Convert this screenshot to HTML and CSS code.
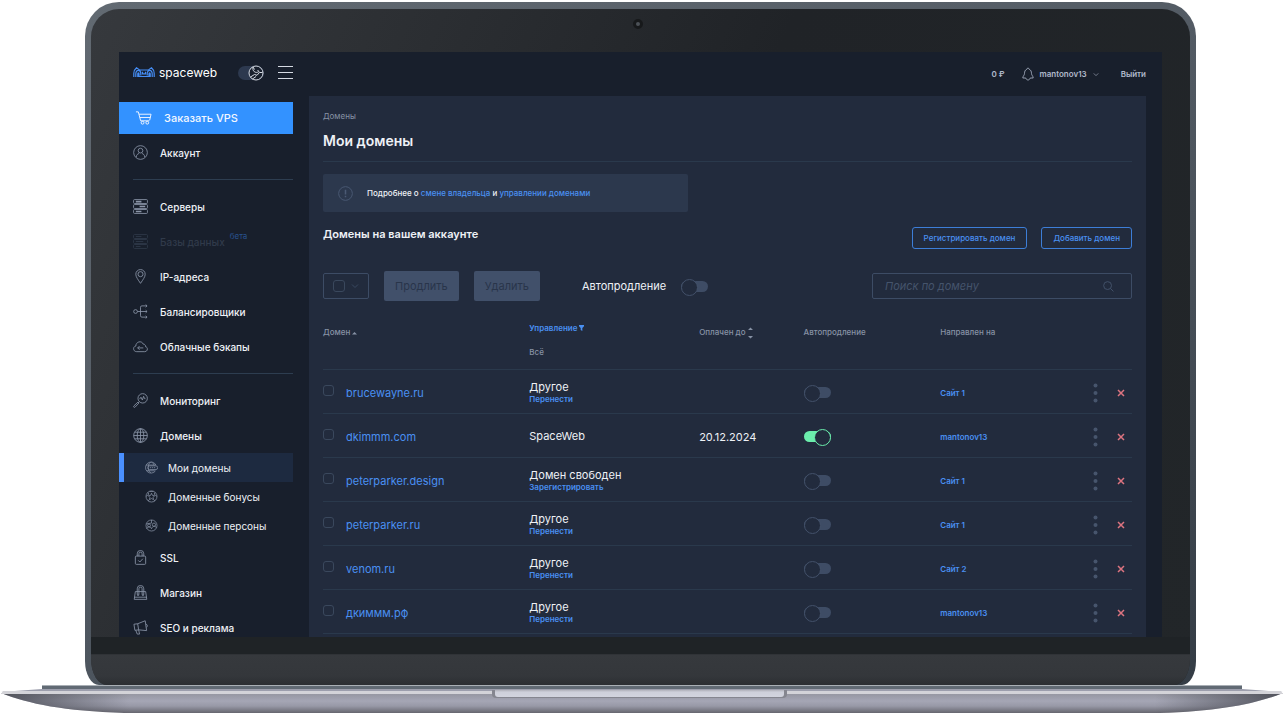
FILE: index.html
```html
<!DOCTYPE html>
<html lang="ru">
<head>
<meta charset="utf-8">
<meta name="viewport" content="width=device-width, initial-scale=1">
<title>Мои домены — spaceweb</title>
<link rel="stylesheet" href="styles.css">
</head>
<body>
<svg class="sprite" aria-hidden="true">
  <symbol id="i-dots" viewBox="0 0 5 20"><circle cx="2.5" cy="2.5" r="2"/><circle cx="2.5" cy="10" r="2"/><circle cx="2.5" cy="17.5" r="2"/></symbol>
  <symbol id="i-x" viewBox="0 0 8 8"><path d="M1 1l6 6M7 1L1 7"/></symbol>
  <symbol id="i-chevron" viewBox="0 0 8 6"><path d="M1 1.500l3 3 3-3"/></symbol>
</svg>
<div class="laptop">
  <div class="lid">
    <div class="bezel">
      <div class="camera-bar"><span class="camera"></span></div>
      <div class="screen">
        <header class="topbar">
          <a class="logo" href="#">
            <svg class="logo-mark" viewBox="0 0 22 11"><path d="M.8 10V6.500C.8 4 2 2 3.500.8L6.500 3h9l3-2.200C20 2 21.200 4 21.200 6.500V10M2.800 10V7c0-2 1-3.700 2.500-3.700S7.800 5 7.800 6.500v2M4.800 10V6.800c0-1.300 1.200-1.300 1.200 0v2.700h10V6.800c0-1.300 1.200-1.300 1.200 0V10M19.200 10V7c0-2-1-3.700-2.500-3.700S14.200 5 14.200 6.500v2M9.500 4.800v2h3v-2"/></svg>
            <span>spaceweb</span>
          </a>
          <button class="theme" type="button" aria-label="Тёмная тема">
            <svg viewBox="0 0 16 16"><circle cx="8" cy="8" r="7"/><path d="M5 2c-1 4 2.500 7 6 4.500L9.500 5M5 2l1.500 2.500M2.500 12l4-2.500 2.500.8 2.500-2.800h3M4.500 14l3.500-2.500"/></svg>
          </button>
          <button class="burger" type="button" aria-label="Меню"><span></span><span></span><span></span></button>
          <nav class="account" aria-label="Профиль">
            <a href="#">0 ₽</a>
            <a class="user" href="#">
              <svg class="bell" viewBox="0 0 12 14"><path d="M6 1c-.8 0-1 .8-1.200 1.300C3 3 2.600 4.500 2.500 6.500 2.400 8.500.8 9 .8 11h3C4.200 12.300 5 13 6 13s1.800-.7 2.200-2h3c0-2-1.600-2.500-1.700-4.500C9.400 4.500 9 3 7.200 2.300 7 1.800 6.800 1 6 1z"/></svg>
              <span>mantonov13</span>
              <svg class="chevron"><use href="#i-chevron"/></svg>
            </a>
            <a href="#">Выйти</a>
          </nav>
        </header>
        <div class="columns">
          <aside class="sidebar">
            <a class="order" href="#">
              <svg viewBox="0 0 18 16"><path d="M1 1.500h2.500L6 11h9M4.300 4H17l-1.500 6.500M5.200 7.500h11"/><circle cx="8" cy="13" r="1.500"/><circle cx="13" cy="13" r="1.500"/></svg>
              <span>Заказать VPS</span>
            </a>
            <nav class="menu" aria-label="Разделы">
              <a href="#"><svg viewBox="0 0 16 16"><circle cx="8" cy="8" r="7.300"/><circle cx="8" cy="6" r="2.500"/><path d="M3.500 13c0-2.500 1.500-3.500 3-4M12.500 13c0-2.500-1.500-3.500-3-4"/></svg><span>Аккаунт</span></a>
              <hr>
              <a href="#"><svg viewBox="0 0 16 16"><rect x=".6" y=".6" width="14.800" height="4.200" rx="1"/><rect x=".6" y="5.900" width="14.800" height="4.200" rx="1"/><rect x=".6" y="11.200" width="14.800" height="4.200" rx="1"/><path d="M3 2.700h6M7 8h6M3 13.300h6" stroke-width="1.800"/></svg><span>Серверы</span></a>
              <a class="disabled" href="#"><svg viewBox="0 0 16 16"><rect x=".6" y=".6" width="14.800" height="4.200" rx="1"/><rect x=".6" y="5.900" width="14.800" height="4.200" rx="1"/><rect x=".6" y="11.200" width="14.800" height="4.200" rx="1"/><path d="M3 2.700h6M3 8h8M3 13.300h5"/></svg><span>Базы данных</span><sup>бета</sup></a>
              <a href="#"><svg viewBox="0 0 16 16"><path d="M8 15.300C5.500 11.500 3 8.500 3 5.600a5 5 0 0 1 10 0c0 2.900-2.500 5.900-5 9.700z"/><circle cx="8" cy="5.500" r="2.700"/></svg><span>IP-адреса</span></a>
              <a href="#"><svg viewBox="0 0 16 16"><circle cx="2.700" cy="8" r="2"/><path d="M4.700 8H15M15 2H9.500C8.500 2 8 2.500 8 3.500v9c0 1 .5 1.500 1.500 1.500H15M13.500.6L15 2l-1.500 1.400M13.500 6.600L15 8l-1.500 1.400M13.500 12.600L15 14l-1.500 1.400"/></svg><span>Балансировщики</span></a>
              <a href="#"><svg viewBox="0 0 16 16"><path d="M4 13.500C-.3 13.500-.3 8 3 7.500 3 3 9 1 11 5.500c2 0 2.500 1.500 2.300 2.700 3 .3 2.700 5.300-.8 5.300H4zM11 9.500H5M7 7.500l-2 2 2 2"/></svg><span>Облачные бэкапы</span></a>
              <hr>
              <a href="#"><svg viewBox="0 0 16 16"><circle cx="10.300" cy="5.700" r="5"/><path d="M6.800 9.200l-1 1M5.300 9.700l1 1-4 4.300c-1 1-2.300-.3-1.300-1.300zM7 6.500l1.500-2 1.500 3 1.300-4 1 2.500h1"/></svg><span>Мониторинг</span></a>
              <a href="#"><svg viewBox="0 0 16 16"><circle cx="8" cy="8" r="7.300"/><ellipse cx="8" cy="8" rx="3.500" ry="7.300"/><path d="M8 .7v14.600M.7 8h14.600M1.800 4.500h12.400M1.800 11.500h12.400"/></svg><span>Домены</span></a>
              <div class="submenu">
                <a class="active" href="#" aria-current="page"><svg viewBox="0 0 16 16"><path d="M13.500 5A6.800 6.800 0 1 0 13 12"/><path d="M1.300 5h12M2 12h10M7 1.200C4.500 3.500 4 5 4 8s.7 4.500 3 6.500M8 1.200c2 1.300 2.800 2.500 3 4"/><rect x="3.500" y="6" width="12" height="4.500" rx="2"/><path d="M6 8.200h7.500" stroke-dasharray="1.500 1"/></svg><span>Мои домены</span></a>
                <a href="#"><svg viewBox="0 0 16 16"><circle cx="8" cy="8" r="6.800"/><path d="M8 4l1.200 2.700 2.800.3-2 2 .6 2.900L8 10.500l-2.600 1.400L6 9 4 7l2.800-.3zM3.500 3l1.300 2L1.300 8M12.500 3l-1.300 2 3.500 3M5.500 1.700h5M3.500 12l1.500 2M12.500 12L11 14"/></svg><span>Доменные бонусы</span></a>
                <a href="#"><svg viewBox="0 0 16 16"><circle cx="8" cy="8" r="6.800"/><circle cx="5" cy="8" r="1.800"/><circle cx="11" cy="7" r="2"/><path d="M2 12c.5-3 5-3 6 0 .5-3.500 5.500-4 6-1M1.500 6L8 5V1.200"/></svg><span>Доменные персоны</span></a>
              </div>
              <a href="#"><svg viewBox="0 0 16 16"><rect x="2.500" y="6.500" width="11" height="8.800" rx="1"/><path d="M4.500 6.500V4a3.500 3.500 0 0 1 7 0v2.500M6.300 6.500V4a1.700 1.700 0 0 1 3.400 0v2.500M5.500 11l1.800 1.800 3.200-3.500"/></svg><span>SSL</span></a>
              <a href="#"><svg viewBox="0 0 16 16"><path d="M2.500 7h11l1.200 8.300H1.300zM4.500 10V4a3.500 3.500 0 0 1 7 0v6M6.300 10V4a1.700 1.700 0 0 1 3.400 0v6"/><circle cx="5.400" cy="10.500" r=".8"/><circle cx="10.600" cy="10.500" r=".8"/><path d="M1.500 13h13"/></svg><span>Магазин</span></a>
              <a href="#"><svg viewBox="0 0 16 16"><path d="M1 4.500l4-.5 8-3.200 1.500 10.500L6 10.500l-4 .5zM5 4l1 6.500M3 11l1.500 4H7l-1-4.500M14 4.500c1.700.2 1.700 3 .3 3.200"/></svg><span>SEO и реклама</span></a>
            </nav>
          </aside>
          <main class="panel">
            <div class="page-head">
              <a class="crumb" href="#">Домены</a>
              <h1>Мои домены</h1>
            </div>
            <div class="notice">
              <svg viewBox="0 0 16 16"><circle cx="8" cy="8" r="7.300"/><path d="M8 4v5M8 10.500v1.500" stroke-width="1.600"/></svg>
              <p>Подробнее о <a href="#">смене владельца</a> и <a href="#">управлении доменами</a></p>
            </div>
            <div class="section-head">
              <h2>Домены на вашем аккаунте</h2>
              <button class="outline" type="button">Регистрировать домен</button>
              <button class="outline" type="button">Добавить домен</button>
            </div>
            <div class="toolbar">
              <div class="picker">
                <input class="check" type="checkbox" aria-label="Выбрать все">
                <svg class="chevron"><use href="#i-chevron"/></svg>
              </div>
              <button class="action" type="button" disabled>Продлить</button>
              <button class="action" type="button" disabled>Удалить</button>
              <label class="auto"><span>Автопродление</span><input class="switch" type="checkbox"></label>
              <div class="search">
                <input type="search" placeholder="Поиск по домену" aria-label="Поиск по домену">
                <svg viewBox="0 0 12 12"><circle cx="5" cy="5" r="4.300"/><path d="M8.200 8.200l3.200 3.200"/></svg>
              </div>
            </div>
            <table>
              <colgroup><col class="c-domain"><col class="c-manage"><col class="c-paid"><col class="c-auto"><col class="c-target"><col class="c-tools"></colgroup>
              <thead>
                <tr>
                  <th scope="col">Домен <svg class="sort" viewBox="0 0 5 8"><path d="M0 5.500L2.500 3 5 5.500z"/></svg></th>
                  <th scope="col"><span class="filter">Управление <svg viewBox="0 0 6 7"><path d="M0 0h6v1.500L4 3.500V7L2 6V3.500L0 1.500z"/></svg></span><span class="filter-value">Всё</span></th>
                  <th scope="col">Оплачен до <svg class="sort tall" viewBox="0 0 5 12"><path d="M0 3L2.500.5 5 3zM0 9l2.500 2.500L5 9z"/></svg></th>
                  <th scope="col">Автопродление</th>
                  <th scope="col">Направлен на</th>
                  <th></th>
                </tr>
              </thead>
              <tbody>
                <tr>
                  <td><div class="domain"><input class="check" type="checkbox" aria-label="brucewayne.ru"><a href="#">brucewayne.ru</a></div></td>
                  <td><div class="manage">Другое<a href="#">Перенести</a></div></td>
                  <td></td>
                  <td><input class="switch" type="checkbox" aria-label="Автопродление brucewayne.ru"></td>
                  <td><a class="target" href="#">Сайт 1</a></td>
                  <td><div class="tools"><button type="button" aria-label="Действия"><svg class="dots"><use href="#i-dots"/></svg></button><button type="button" aria-label="Удалить"><svg class="cross"><use href="#i-x"/></svg></button></div></td>
                </tr>
                <tr>
                  <td><div class="domain"><input class="check" type="checkbox" aria-label="dkimmm.com"><a href="#">dkimmm.com</a></div></td>
                  <td><div class="manage">SpaceWeb</div></td>
                  <td>20.12.2024</td>
                  <td><input class="switch" type="checkbox" checked aria-label="Автопродление dkimmm.com"></td>
                  <td><a class="target" href="#">mantonov13</a></td>
                  <td><div class="tools"><button type="button" aria-label="Действия"><svg class="dots"><use href="#i-dots"/></svg></button><button type="button" aria-label="Удалить"><svg class="cross"><use href="#i-x"/></svg></button></div></td>
                </tr>
                <tr>
                  <td><div class="domain"><input class="check" type="checkbox" aria-label="peterparker.design"><a href="#">peterparker.design</a></div></td>
                  <td><div class="manage">Домен свободен<a href="#">Зарегистрировать</a></div></td>
                  <td></td>
                  <td><input class="switch" type="checkbox" aria-label="Автопродление peterparker.design"></td>
                  <td><a class="target" href="#">Сайт 1</a></td>
                  <td><div class="tools"><button type="button" aria-label="Действия"><svg class="dots"><use href="#i-dots"/></svg></button><button type="button" aria-label="Удалить"><svg class="cross"><use href="#i-x"/></svg></button></div></td>
                </tr>
                <tr>
                  <td><div class="domain"><input class="check" type="checkbox" aria-label="peterparker.ru"><a href="#">peterparker.ru</a></div></td>
                  <td><div class="manage">Другое<a href="#">Перенести</a></div></td>
                  <td></td>
                  <td><input class="switch" type="checkbox" aria-label="Автопродление peterparker.ru"></td>
                  <td><a class="target" href="#">Сайт 1</a></td>
                  <td><div class="tools"><button type="button" aria-label="Действия"><svg class="dots"><use href="#i-dots"/></svg></button><button type="button" aria-label="Удалить"><svg class="cross"><use href="#i-x"/></svg></button></div></td>
                </tr>
                <tr>
                  <td><div class="domain"><input class="check" type="checkbox" aria-label="venom.ru"><a href="#">venom.ru</a></div></td>
                  <td><div class="manage">Другое<a href="#">Перенести</a></div></td>
                  <td></td>
                  <td><input class="switch" type="checkbox" aria-label="Автопродление venom.ru"></td>
                  <td><a class="target" href="#">Сайт 2</a></td>
                  <td><div class="tools"><button type="button" aria-label="Действия"><svg class="dots"><use href="#i-dots"/></svg></button><button type="button" aria-label="Удалить"><svg class="cross"><use href="#i-x"/></svg></button></div></td>
                </tr>
                <tr>
                  <td><div class="domain"><input class="check" type="checkbox" aria-label="дкиммм.рф"><a href="#">дкиммм.рф</a></div></td>
                  <td><div class="manage">Другое<a href="#">Перенести</a></div></td>
                  <td></td>
                  <td><input class="switch" type="checkbox" aria-label="Автопродление дкиммм.рф"></td>
                  <td><a class="target" href="#">mantonov13</a></td>
                  <td><div class="tools"><button type="button" aria-label="Действия"><svg class="dots"><use href="#i-dots"/></svg></button><button type="button" aria-label="Удалить"><svg class="cross"><use href="#i-x"/></svg></button></div></td>
                </tr>
              </tbody>
            </table>
          </main>
        </div>
      </div>
      <div class="chin-gap"></div>
      <div class="chin"></div>
    </div>
  </div>
  <svg class="base" viewBox="0 0 1284 28" preserveAspectRatio="none" aria-hidden="true">
    <defs>
      <linearGradient id="metal" x1="0" y1="0" x2="0" y2="1"><stop offset="0" stop-color="#94959f"/><stop offset=".4" stop-color="#a5a6b5"/><stop offset=".65" stop-color="#9899a7"/><stop offset="1" stop-color="#66666f"/></linearGradient>
      <linearGradient id="ends"><stop offset="0" stop-color="#3e4048" stop-opacity=".8"/><stop offset=".1" stop-color="#3e4048" stop-opacity="0"/><stop offset=".9" stop-color="#3e4048" stop-opacity="0"/><stop offset="1" stop-color="#3e4048" stop-opacity=".8"/></linearGradient>
      <linearGradient id="notch" x1="0" y1="0" x2="0" y2="1"><stop offset="0" stop-color="#b0b1ba"/><stop offset=".3" stop-color="#ced0da"/><stop offset="1" stop-color="#d2d4de"/></linearGradient>
    </defs>
    <path fill="#9c9eac" d="M1 7L42 4H1242L1283 7z"/>
    <path fill="url(#metal)" d="M1 8H1283C1255 19 1220 26 1160 28H124C64 26 29 19 1 8z"/>
    <path fill="url(#ends)" d="M1 8H1283C1255 19 1220 26 1160 28H124C64 26 29 19 1 8z"/>
    <path fill="#d3d3d8" d="M3 6H1281L1283 9H1z"/>
    <path fill="#616a74" d="M42 1H1242V4H42z"/>
    <path fill="#a9afb5" d="M42 0H1242V1H42z"/>
    <path fill="#85868f" d="M492 5H787V9Q787 13 783 13H496Q492 13 492 9z"/>
    <path fill="url(#notch)" d="M495 5H784V9Q784 12 781 12H498Q495 12 495 9z"/>
  </svg>
</div>
</body>
</html>
```

FILE: styles.css
```css
:root {
  --ink: #181f2c;
  --panel: #222b3d;
  --card: #2c384d;
  --line: #2a394c;
  --edge: #3d4c65;
  --muted: #8792a5;
  --text: #eef1f6;
  --link: #4a90f2;
}

* {
  box-sizing: border-box;
}

body {
  margin: 0;
  background: #fff;
  color: var(--text);
  font: 11px/16px Inter, "Liberation Sans", sans-serif;
}

a {
  color: var(--link);
  text-decoration: none;
}

button,
input {
  margin: 0;
  font: inherit;
}

svg {
  flex: none;
  fill: none;
  stroke: currentColor;
}

.sprite {
  position: absolute;
  width: 0;
  height: 0;
}

/* Laptop */
.laptop {
  display: flex;
  flex-direction: column;
  height: 100vh;
  padding-top: 2px;
}

.lid {
  display: flex;
  flex: 1;
  min-height: 0;
  margin: 0 88px 0 85px;
  padding: 7px 6px 0;
  border-radius: 34px 34px 14px 14px / 34px 34px 24px 24px;
  background: linear-gradient(155deg, #626a72, #535b64 45%, #343c45);
}

.bezel {
  display: flex;
  flex: 1;
  flex-direction: column;
  min-width: 0;
  overflow: hidden;
  border-radius: 28px 28px 16px 16px / 28px 28px 26px 26px;
  background: linear-gradient(115deg, #36393d, #202327 50%, #222629);
}

.camera-bar {
  display: flex;
  flex: none;
  justify-content: center;
  height: 43px;
  padding: 10px 6px 0 0;
}

.camera {
  width: 10px;
  height: 10px;
  border: 3px solid #17191b;
  border-radius: 50%;
  background: #4c5157;
}

.screen {
  display: flex;
  flex: 1;
  flex-direction: column;
  min-height: 0;
  margin: 0 28px;
  overflow: hidden;
  background: var(--ink);
}

.chin-gap {
  flex: none;
  height: 17px;
  background: #1f2326;
}

.chin {
  flex: none;
  height: 31px;
  border-top: 1px solid #303337;
  background: linear-gradient(#36393d, #34373b 70%, #2b2e32);
}

.base {
  display: block;
  width: 100%;
  height: 28px;
  stroke: none;
}

/* Top bar */
.topbar {
  display: flex;
  flex: none;
  align-items: center;
  height: 44px;
  padding: 0 16px 3px 14px;
}

.logo {
  display: flex;
  align-items: center;
  gap: 4px;
  color: #fff;
  font-size: 12px;
}

.logo-mark {
  width: 22px;
  height: 11px;
  color: #458df5;
  stroke-width: 1.2;
}

.theme {
  display: flex;
  justify-content: flex-end;
  align-items: center;
  width: 26px;
  height: 14px;
  margin-left: 21px;
  padding: 0;
  border: 0;
  border-radius: 7px;
  background: #2d394f;
  color: #d5dae3;
}

.theme svg {
  width: 16px;
  height: 16px;
  fill: var(--ink);
}

.burger {
  display: flex;
  flex-direction: column;
  gap: 5px;
  width: 15px;
  margin-left: 14px;
  padding: 0;
  border: 0;
  background: none;
}

.burger span {
  height: 1px;
  background: #d5dae3;
}

.account {
  display: flex;
  align-items: center;
  gap: 17px;
  margin-left: auto;
  padding-top: 3px;
  font-size: 8px;
  font-weight: 600;
}

.account a {
  color: #b0b9cb;
}

.account .user {
  display: flex;
  align-items: center;
  gap: 6px;
  margin-right: 5px;
}

.bell {
  width: 12px;
  height: 14px;
  stroke-width: 0.8;
}

.chevron {
  width: 8px;
  height: 6px;
  stroke-width: 0.8;
}

.user .chevron {
  width: 6px;
  height: 5px;
}

.columns {
  display: grid;
  flex: 1;
  grid-template-columns: 174px minmax(0, 1fr);
  gap: 16px;
  min-height: 0;
  padding-right: 16px;
}

/* Sidebar */
.sidebar {
  padding-top: 6px;
}

.order {
  display: flex;
  align-items: center;
  gap: 12px;
  height: 32px;
  margin-bottom: 1px;
  padding-left: 16px;
  background: #3392ff;
  color: #f2f7ff;
  font-weight: 500;
}

.order svg {
  width: 17px;
  height: 16px;
}

.menu a {
  display: flex;
  align-items: center;
  gap: 12px;
  height: 35px;
  padding-left: 14px;
  color: var(--text);
  font-size: 10px;
  font-weight: 500;
}

.menu svg {
  width: 15px;
  height: 15px;
  color: #8b95a8;
  stroke-width: 0.9;
}

.menu hr {
  height: 1px;
  margin: 9px 0 9px 14px;
  border: 0;
  background: #2d3d50;
}

.menu .disabled,
.menu .disabled svg {
  color: #303a4a;
}

.menu sup {
  align-self: flex-start;
  margin-left: -7px;
  padding-top: 4px;
  color: #28528f;
  font-size: 8px;
  font-weight: 400;
  line-height: 16px;
}

.menu .submenu a {
  gap: 10px;
  height: 29px;
  padding-left: 26px;
  font-weight: 400;
}

.menu .submenu svg {
  width: 13px;
  height: 13px;
}

.menu .submenu .active {
  padding-left: 21px;
  border-left: 5px solid #4a90ff;
  background: #1d2a40;
}

/* Main panel */
.panel {
  padding: 12px 14px 0;
  background: var(--panel);
}

.page-head {
  display: grid;
  gap: 8px;
  padding-bottom: 12px;
  border-bottom: 1px solid var(--line);
}

.crumb {
  color: var(--muted);
  font-size: 8px;
}

h1,
h2,
p {
  margin: 0;
}

h1 {
  font-size: 14px;
  font-weight: 600;
  line-height: 17px;
}

.notice {
  display: flex;
  align-items: center;
  gap: 14px;
  width: 365px;
  max-width: 100%;
  min-height: 38px;
  margin-top: 12px;
  padding: 0 15px;
  border-radius: 2px;
  background: var(--card);
  font-size: 8px;
  font-weight: 500;
}

.notice svg {
  width: 15px;
  height: 15px;
  color: #4b5a74;
}

.section-head {
  display: flex;
  gap: 14px;
  margin-top: 15px;
}

h2 {
  margin-right: auto;
  font-size: 11px;
  font-weight: 600;
  line-height: 15px;
}

.outline {
  height: 22px;
  padding: 0 11px;
  border: 1px solid #3d7ed8;
  border-radius: 3px;
  background: none;
  color: var(--link);
  font-size: 8px;
  font-weight: 500;
}

.toolbar {
  display: flex;
  align-items: center;
  gap: 15px;
  margin-top: 22px;
}

.picker {
  display: flex;
  align-items: center;
  gap: 6px;
  height: 26px;
  padding: 0 9px;
  border: 1px solid var(--edge);
  border-radius: 2px;
  color: #3f4f68;
}

.check {
  flex: none;
  width: 11px;
  height: 11px;
  border: 1px solid #3a485d;
  border-radius: 3px;
  appearance: none;
}

.picker .check {
  width: 12px;
  height: 12px;
}

.action {
  height: 30px;
  padding: 0 11px;
  border: 0;
  border-radius: 2px;
  background: #41506a;
  color: #29354a;
}

.auto {
  display: flex;
  align-items: center;
  gap: 15px;
  margin-left: 27px;
}

.switch {
  position: relative;
  display: block;
  width: 27px;
  height: 11px;
  border-radius: 6px;
  background: #3e4c65;
  appearance: none;
}

.switch::before {
  position: absolute;
  top: -2px;
  left: 0;
  width: 15px;
  height: 15px;
  border: 1px solid #43516a;
  border-radius: 50%;
  background: var(--panel);
  content: "";
}

.switch:checked {
  background: #6bedac;
}

.switch:checked::before {
  right: 0;
  left: auto;
  border-color: #6bedac;
}

.search {
  display: flex;
  align-items: center;
  width: 260px;
  height: 26px;
  margin-left: auto;
  padding: 0 17px 0 12px;
  border: 1px solid var(--edge);
  border-radius: 2px;
  color: #45546c;
}

.search input {
  flex: 1;
  min-width: 0;
  padding: 0;
  border: 0;
  outline: 0;
  background: none;
  color: var(--text);
  font-style: italic;
  appearance: none;
}

.search input::placeholder {
  color: #45546c;
}

.search svg {
  width: 11px;
  height: 11px;
}

/* Domain table */
table {
  width: 100%;
  margin-top: 6px;
  border-collapse: collapse;
  table-layout: fixed;
}

.c-domain { width: 25.5%; }
.c-manage { width: 21%; }
.c-paid { width: 12.9%; }
.c-auto { width: 16.9%; }
.c-target { width: 18.3%; }
.c-tools { width: 5.4%; }

th,
td {
  padding: 0;
  border-bottom: 1px solid var(--line);
  text-align: left;
  vertical-align: middle;
}

th {
  height: 62px;
  padding-bottom: 11px;
  color: var(--muted);
  font-size: 8px;
  font-weight: 500;
}

th:nth-child(2) {
  padding: 9px 0 4px;
}

td {
  height: 44px;
  padding-top: 3px;
}

th svg {
  fill: currentColor;
  stroke: none;
}

.sort {
  width: 5px;
  height: 8px;
  vertical-align: middle;
}

.sort.tall {
  height: 12px;
}

.filter,
.filter-value {
  display: block;
}

.filter {
  margin-bottom: 8px;
  color: var(--link);
  font-weight: 600;
}

.filter svg {
  width: 5px;
  height: 6px;
}

.domain {
  display: flex;
  align-items: center;
  gap: 12px;
}

.domain .check {
  margin-bottom: 4px;
}

.manage {
  line-height: 13px;
}

.manage a {
  display: block;
  font-size: 8px;
  font-weight: 600;
  line-height: 11px;
}

.target {
  font-size: 8px;
  font-weight: 600;
}

.tools {
  display: flex;
  align-items: center;
  justify-content: space-between;
  padding: 0 7px 0 5px;
}

.tools button {
  display: flex;
  padding: 0;
  border: 0;
  background: none;
}

.dots {
  width: 5px;
  height: 20px;
  fill: #47556d;
  stroke: none;
}

.cross {
  width: 8px;
  height: 8px;
  color: #dd7480;
  stroke-width: 1.5;
}
```
